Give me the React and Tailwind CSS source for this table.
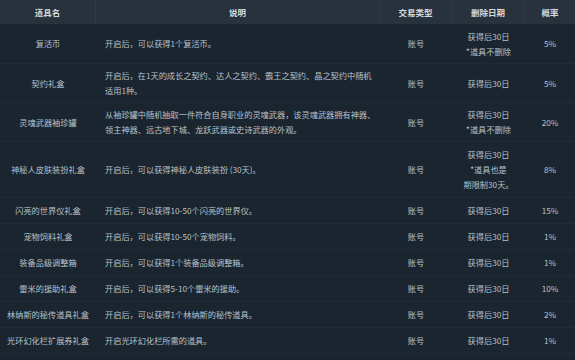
import React from "react";

const rows = [
  { h: "h-[40px]", name: "复活币", desc: ["开启后，可以获得1个复活币。"], type: "账号", del: ["获得后30日", "*道具不删除"], p: "5%" },
  { h: "h-[39px]", name: "契约礼盒", desc: ["开启后，在1天的成长之契约、达人之契约、霸王之契约、晶之契约中随机", "适用1种。"], type: "账号", del: ["获得后30日"], p: "5%" },
  { h: "h-[39px]", name: "灵魂武器袖珍罐", desc: ["从袖珍罐中随机抽取一件符合自身职业的灵魂武器，该灵魂武器拥有神器、", "领主神器、远古地下城、龙跃武器或史诗武器的外观。"], type: "账号", del: ["获得后30日", "*道具不删除"], p: "20%" },
  { h: "h-[56px]", name: "神秘人皮肤装扮礼盒", desc: ["开启后，可以获得神秘人皮肤装扮 (30天)。"], type: "账号", del: ["获得后30日", "*道具也是", "期限制30天。"], p: "8%" },
  { h: "h-[26px]", name: "闪亮的世界仪礼盒", desc: ["开启后，可以获得10-50个闪亮的世界仪。"], type: "账号", del: ["获得后30日"], p: "15%" },
  { h: "h-[26px]", name: "宠物饲料礼盒", desc: ["开启后，可以获得10-50个宠物饲料。"], type: "账号", del: ["获得后30日"], p: "1%" },
  { h: "h-[26px]", name: "装备品级调整箱", desc: ["开启后，可以获得1个装备品级调整箱。"], type: "账号", del: ["获得后30日"], p: "1%" },
  { h: "h-[26px]", name: "雷米的援助礼盒", desc: ["开启后，可以获得5-10个雷米的援助。"], type: "账号", del: ["获得后30日"], p: "10%" },
  { h: "h-[26px]", name: "林纳斯的秘传道具礼盒", desc: ["开启后，可以获得1个林纳斯的秘传道具。"], type: "账号", del: ["获得后30日"], p: "2%" },
  { h: "h-[26px]", name: "光环幻化栏扩展券礼盒", desc: ["开启光环幻化栏所需的道具。"], type: "账号", del: ["获得后30日"], p: "1%" },
];

const cols = "grid grid-cols-[96px_284px_72px_73px_50px]";

export default function App() {
  return (
    <div
      className="w-[575px] h-[360px] overflow-hidden bg-[#1b2530] text-[#b7c2c9] text-[8.2px] leading-[15px]"
      style={{ fontFamily: '"Noto Sans CJK SC", "Noto Sans", sans-serif' }}
    >
      <div className={`${cols} h-[24px] bg-[#27323d] text-[#d3dade] text-[8.5px] font-bold`}>
        <div className="flex items-center justify-center border-r border-[#2d3944]">道具名</div>
        <div className="flex items-center justify-center border-r border-[#2d3944]">说明</div>
        <div className="flex items-center justify-center border-r border-[#2d3944]">交易类型</div>
        <div className="flex items-center justify-center border-r border-[#2d3944]">删除日期</div>
        <div className="flex items-center justify-center">概率</div>
      </div>
      {rows.map((r, i) => (
        <div key={i} className={`${cols} ${r.h} border-b border-[#202b35]`}>
          <div className="flex items-center justify-center whitespace-nowrap">{r.name}</div>
          <div className="flex flex-col justify-center pl-[9px] whitespace-nowrap overflow-hidden">
            {r.desc.map((l, j) => (
              <div key={j}>{l}</div>
            ))}
          </div>
          <div className="flex items-center justify-center">{r.type}</div>
          <div className="flex flex-col items-center justify-center whitespace-nowrap">
            {r.del.map((l, j) => (
              <div key={j}>{l}</div>
            ))}
          </div>
          <div className="flex items-center justify-center">{r.p}</div>
        </div>
      ))}
    </div>
  );
}
